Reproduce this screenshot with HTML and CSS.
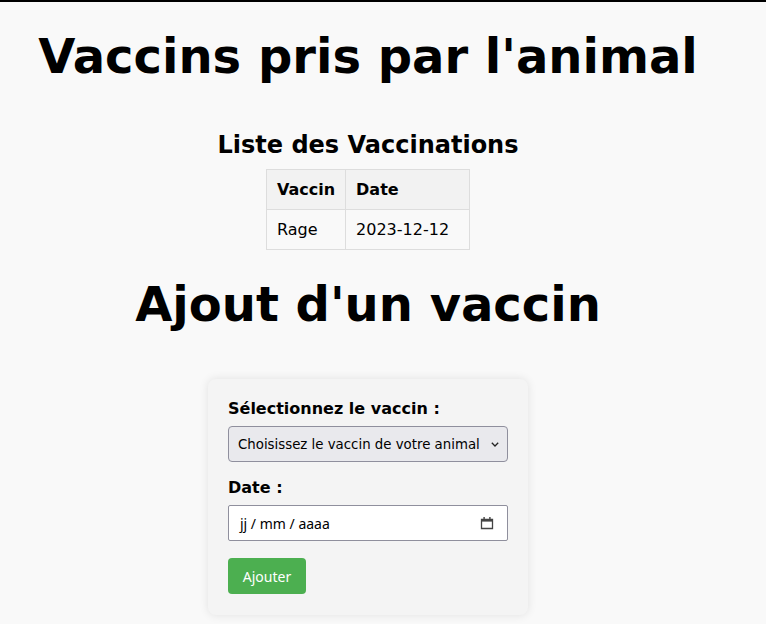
FILE: index.html
```html
<!DOCTYPE html>
<html lang="fr">
<head>
<meta charset="utf-8">
<title>Vaccins pris par l'animal</title>
<link rel="stylesheet" href="styles.css">
</head>
<body>
<main class="page">
  <h1 class="title">Vaccins pris par l'animal</h1>
  <section class="list">
    <h2 class="list-title">Liste des Vaccinations</h2>
    <table class="vacc-table">
      <thead>
        <tr><th>Vaccin</th><th class="col-date">Date</th></tr>
      </thead>
      <tbody>
        <tr><td>Rage</td><td class="col-date">2023-12-12</td></tr>
      </tbody>
    </table>
  </section>
  <h1 class="title title-add">Ajout d'un vaccin</h1>
  <form class="card">
    <label class="field-label" for="vaccin">Sélectionnez le vaccin :</label>
    <div class="select-wrap">
      <select id="vaccin" class="select">
        <option>Choisissez le vaccin de votre animal</option>
      </select>
      <svg class="chevron" width="8" height="5" viewBox="0 0 8 5"><path d="M0.8 0.8 L4 4 L7.2 0.8" fill="none" stroke="#222" stroke-width="1.3"/></svg>
    </div>
    <label class="field-label label-date" for="date">Date :</label>
    <div class="date-field">
      <span class="date-text">jj / mm / aaaa</span>
      <svg class="cal" width="14" height="14" viewBox="0 0 14 14"><path d="M1.5 3.5 H12.5 V12.5 H1.5 Z" fill="none" stroke="#444" stroke-width="1.3"/><rect x="1.5" y="3" width="11" height="2.6" fill="#444"/><rect x="3.4" y="1" width="1.4" height="2.5" fill="#444"/><rect x="9.2" y="1" width="1.4" height="2.5" fill="#444"/></svg>
    </div>
    <button type="button" class="btn">Ajouter</button>
  </form>
</main>
</body>
</html>
```
FILE: styles.css
```css
html, body {
  margin: 0;
  padding: 0;
}
body {
  background: #f9f9f9;
  border-top: 2px solid #000;
  font-family: "DejaVu Sans", sans-serif;
  color: #000;
}
.page {
  width: 736px;
  display: flex;
  flex-direction: column;
  align-items: center;
  padding-bottom: 20px;
}
.title {
  font-size: 48px;
  font-weight: bold;
  margin: 26px 0 0;
  line-height: 56px;
}
.list {
  display: flex;
  flex-direction: column;
  align-items: center;
}
.list-title {
  font-size: 24px;
  margin: 47px 0 10px;
  line-height: 28px;
}
.vacc-table {
  border-collapse: collapse;
  font-size: 16px;
}
.vacc-table th,
.vacc-table td {
  border: 1px solid #ddd;
  padding: 10px;
  text-align: left;
  line-height: 19px;
}
.vacc-table .col-date {
  padding-right: 20px;
}
.vacc-table th {
  background: #f2f2f2;
  font-weight: bold;
}
.title-add {
  margin-top: 26px;
}
.card {
  margin-top: 47px;
  width: 280px;
  padding: 20px 20px 21px;
  background: #f4f4f4;
  border-radius: 8px;
  box-shadow: 0 0 10px rgba(0, 0, 0, 0.1);
  display: flex;
  flex-direction: column;
  align-items: flex-start;
}
.field-label {
  font-weight: bold;
  font-size: 16px;
  line-height: 19px;
  margin-bottom: 8px;
}
.label-date {
  margin-top: 16px;
}
.select-wrap {
  position: relative;
  width: 280px;
}
.select {
  -webkit-appearance: none;
  appearance: none;
  display: block;
  width: 280px;
  height: 36px;
  box-sizing: border-box;
  background: #e9e9ed;
  border: 1px solid #8f8f9d;
  border-radius: 4px;
  padding: 0 20px 0 9px;
  font-family: "DejaVu Sans", sans-serif;
  font-size: 13.333px;
  color: #000;
}
.chevron {
  position: absolute;
  right: 9px;
  top: 16px;
}
.date-field {
  width: 280px;
  height: 36px;
  box-sizing: border-box;
  background: #fff;
  border: 1px solid #8f8f9d;
  border-radius: 2px;
  display: flex;
  align-items: center;
  justify-content: space-between;
  padding: 0 13px 0 11px;
  font-family: "Noto Sans", sans-serif;
  font-size: 14px;
}
.cal {
  display: block;
}
.btn {
  margin-top: 17px;
  width: 78px;
  height: 36px;
  background: #4caf50;
  color: #fff;
  border: none;
  border-radius: 4px;
  font-family: "Noto Sans", sans-serif;
  font-size: 14px;
  padding: 0;
}
```
